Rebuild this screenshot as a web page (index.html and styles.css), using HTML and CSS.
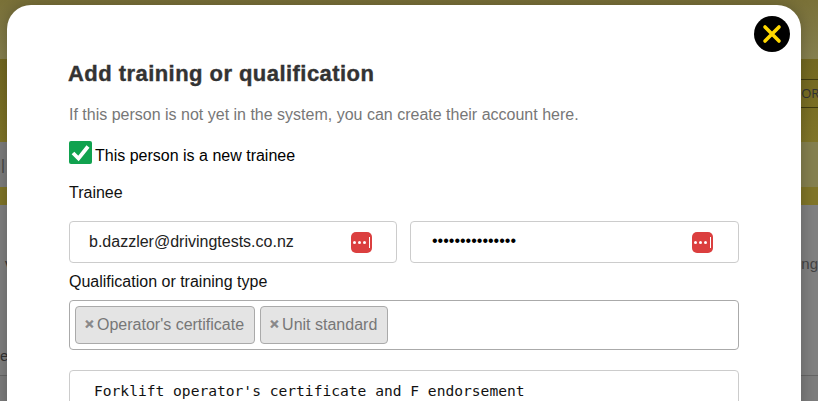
FILE: index.html
```html
<!DOCTYPE html>
<html lang="en">
<head>
  <meta charset="UTF-8">
  <meta name="viewport" content="width=device-width, initial-scale=1.0">
  <title>Add training or qualification</title>
  <link rel="stylesheet" href="styles.css">
</head>
<body>
  <!-- page behind the modal, dimmed -->
  <div class="backdrop">
    <div class="band band-top"></div>
    <div class="band band-yellow">
      <div class="cor-box">COR</div>
    </div>
    <div class="band band-grey-a"><span class="left-bar">|</span></div>
    <div class="band band-yellow-b"></div>
    <div class="band-grey-b">
      <div class="band side-row">
        <span class="side-text-left">v</span>
        <span class="side-text-right">ing</span>
      </div>
      <div class="side-note">e:</div>
    </div>
    <div class="band band-grey-c"></div>
  </div>

  <div class="modal">
    <button class="close-btn" aria-label="Close">
      <svg width="20" height="20" viewBox="0 0 20 20">
        <path d="M3 3 L17 17 M17 3 L3 17" stroke="#ffd800" stroke-width="3.6" stroke-linecap="round" fill="none"/>
      </svg>
    </button>

    <h2 class="modal-title">Add training or qualification</h2>
    <p class="modal-help">If this person is not yet in the system, you can create their account here.</p>

    <label class="check-row">
      <span class="check-box">
        <svg width="23" height="23" viewBox="0 0 23 23">
          <path d="M4 12 L9.5 17.5 L19 5.5" stroke="#fff" stroke-width="3.8" fill="none"/>
        </svg>
      </span>
      <span class="check-text">This person is a new trainee</span>
    </label>

    <div class="field-label trainee-label">Trainee</div>

    <div class="login-row">
      <div class="text-box email-box">
        <span>b.dazzler@drivingtests.co.nz</span>
        <span class="pw-icon"><i></i><i></i><i></i><b></b></span>
      </div>
      <div class="text-box">
        <span class="dots">•••••••••••••••</span>
        <span class="pw-icon"><i></i><i></i><i></i><b></b></span>
      </div>
    </div>

    <div class="field-label">Qualification or training type</div>
    <div class="tag-box">
      <span class="tag"><span class="tag-x">×</span>Operator's certificate</span>
      <span class="tag"><span class="tag-x">×</span>Unit standard</span>
    </div>

    <div class="mono-box">Forklift operator's certificate and F endorsement</div>
  </div>
</body>
</html>
```

FILE: styles.css
```css
html, body {
  margin: 0;
  height: 401px;
  overflow: hidden;
}

body {
  font-family: "Liberation Sans", Arial, sans-serif;
  position: relative;
  background: #7f7f7f;
}

.backdrop {
  height: 401px;
  display: flex;
  flex-direction: column;
  color: #333;
  font-size: 15px;
}

.band {
  display: flex;
  justify-content: space-between;
  align-items: center;
}

.band-top {
  height: 59px;
  background: linear-gradient(#7a7138, #86804f);
}

.band-yellow {
  height: 83px;
  background: linear-gradient(#736820, #807528);
  justify-content: flex-end;
  align-items: flex-start;
}

.cor-box {
  margin-top: 20px;
  width: 25px;
  height: 27px;
  line-height: 27px;
  border-top: 1px solid #3f3a10;
  border-bottom: 1px solid #3f3a10;
  font-family: "Open Sans", sans-serif;
  font-size: 13px;
  white-space: nowrap;
  overflow: hidden;
}

.band-grey-a {
  height: 45px;
  background: linear-gradient(90deg, #7d7d7d 50%, #85804f 50%);
}

.left-bar {
  margin-left: 1px;
  color: #444;
}

.band-yellow-b {
  height: 18px;
  background: #807528;
}

.band-grey-b {
  height: 170px;
  box-sizing: border-box;
  padding-top: 50px;
  background: #808080;
}

.side-row {
  height: 17px;
}

.side-text-left {
  color: #333;
  margin-left: 5px;
}

.side-text-right {
  color: #444;
}

.side-note {
  margin-top: 75px;
  line-height: 17px;
  color: #333;
}

.band-grey-c {
  flex: 1;
  background: #7d7d7d;
  border-top: 1px solid #666;
}

.modal {
  position: absolute;
  left: 7px;
  top: 5px;
  width: 794px;
  height: 420px;
  box-sizing: border-box;
  padding: 56px 62px 0;
  background: #fff;
  border-radius: 24px;
  box-shadow: 0 0 16px rgba(0, 0, 0, 0.25);
}

.close-btn {
  position: absolute;
  top: 11px;
  right: 11px;
  width: 36px;
  height: 36px;
  padding: 0;
  border: 0;
  border-radius: 50%;
  background: #000;
  display: flex;
  align-items: center;
  justify-content: center;
}

.modal-title {
  margin: 0 0 0 -1px;
  font-size: 22px;
  line-height: 26px;
  font-weight: bold;
  color: #333;
  letter-spacing: 0.45px;
  -webkit-text-stroke: 0.4px #333;
}

.modal-help {
  margin: 18px 0 0;
  font-size: 16px;
  line-height: 20px;
  color: #777;
}

.check-row {
  display: flex;
  gap: 3px;
  margin-top: 16px;
  height: 23px;
  font-size: 16px;
  color: #000;
}

.check-text {
  padding-top: 6px;
}

.check-box {
  width: 23px;
  height: 23px;
  border-radius: 2px;
  background: #11a24f;
}

.field-label {
  font-size: 16px;
  line-height: 20px;
  color: #111;
}

.trainee-label {
  margin-top: 19px;
}

.login-row {
  display: grid;
  grid-template-columns: 328px 1fr;
  gap: 13px;
  margin: 18px 0 9px;
}

.text-box {
  height: 42px;
  box-sizing: border-box;
  padding: 0 25px 0 19px;
  display: flex;
  align-items: center;
  justify-content: space-between;
  border: 1px solid #ccc;
  border-radius: 4px;
  font-size: 16px;
  color: #222;
}

.email-box {
  padding-right: 24px;
}

.dots {
  font-size: 16px;
  line-height: 16px;
  color: #000;
  margin: 0 0 2px 2px;
}

.pw-icon {
  width: 21px;
  height: 21px;
  border-radius: 5px;
  background: #db3f3f;
  display: flex;
  align-items: center;
  gap: 2px;
  padding-left: 2px;
  box-sizing: border-box;
}

.pw-icon i {
  width: 3px;
  height: 3px;
  border-radius: 50%;
  background: #fff;
}

.pw-icon b {
  width: 1px;
  height: 11px;
  margin-left: 1px;
  background: #fff;
}

.tag-box {
  margin-top: 8px;
  height: 50px;
  box-sizing: border-box;
  padding: 5px;
  display: flex;
  gap: 5px;
  border: 1px solid #aaa;
  border-radius: 4px;
}

.tag {
  display: flex;
  align-items: center;
  height: 38px;
  box-sizing: border-box;
  padding: 0 10px;
  background: #e4e4e4;
  border: 1px solid #aaa;
  border-radius: 4px;
  font-size: 16px;
  color: #777;
}

.tag-x {
  width: 11px;
  margin: 0 0 3px -1px;
  padding-right: 1px;
  font-size: 15px;
  font-weight: bold;
  color: #888;
  -webkit-text-stroke: 0.5px #888;
}

.mono-box {
  margin-top: 20px;
  height: 60px;
  box-sizing: border-box;
  padding: 11px 24px;
  border: 1px solid #ccc;
  border-radius: 4px;
  font-family: "DejaVu Sans Mono", monospace;
  font-size: 14.6px;
  color: #111;
}
```
